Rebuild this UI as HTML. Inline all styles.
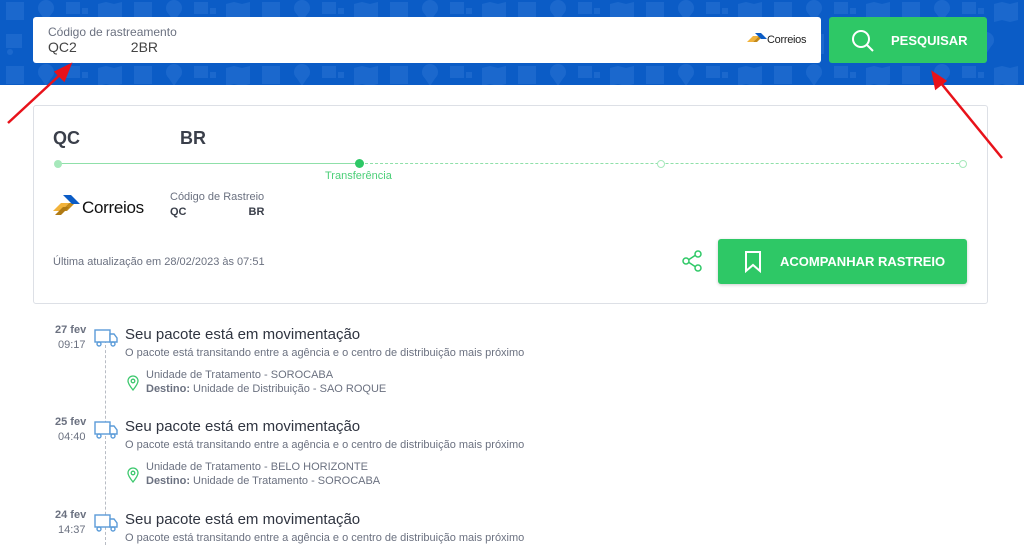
<!DOCTYPE html>
<html><head><meta charset="utf-8"><style>
*{margin:0;padding:0;box-sizing:border-box}
body{width:1024px;height:545px;overflow:hidden;background:#fff;font-family:"Liberation Sans",sans-serif;color:#3a3f4a;position:relative}
.hdr{position:absolute;left:0;top:0;width:1024px;height:85px;background:#0b5cc6;overflow:hidden}
.inp{position:absolute;left:33px;top:17px;width:788px;height:46px;background:#fff;border-radius:3px}
.btn{position:absolute;background:#2ec866;border-radius:3px;color:#fff;font-weight:bold;font-size:13px}
.card{position:absolute;left:33px;top:105px;width:955px;height:199px;border:1px solid #dde0e6;border-radius:3px}
.ab{position:absolute;white-space:nowrap}
.g{color:#6b7180}
</style></head><body>
<div class="hdr">
<svg width="1024" height="85" style="position:absolute;left:0;top:0;opacity:0.12">
<defs><pattern id="p" width="128" height="64" patternUnits="userSpaceOnUse" x="-2" y="-2">
<rect x="8" y="4" width="18" height="18" fill="#8fc0ff"/>
<circle cx="48" cy="10" r="8" fill="#8fc0ff"/><path d="M40 12 L48 24 L56 12z" fill="#8fc0ff"/>
<rect x="68" y="4" width="14" height="12" fill="#8fc0ff"/><rect x="84" y="10" width="6" height="6" fill="#8fc0ff"/>
<path d="M100 6 L108 4 L116 6 L124 4 V22 L116 24 L108 22 L100 24z" fill="#8fc0ff"/>
<rect x="8" y="36" width="16" height="14" fill="#8fc0ff"/><circle cx="12" cy="54" r="3" fill="#8fc0ff"/>
<rect x="40" y="36" width="18" height="20" fill="#8fc0ff"/>
<circle cx="92" cy="42" r="8" fill="#8fc0ff"/><path d="M84 44 L92 56 L100 44z" fill="#8fc0ff"/>
</pattern></defs><rect width="1024" height="85" fill="url(#p)"/></svg>
</div>
<div class="inp">
<div class="ab g" style="left:15px;top:8px;font-size:12px">Código de rastreamento</div>
<div class="ab" style="left:15px;top:22px;font-size:14px;color:#444">QC2<span style="margin-left:54px">2BR</span></div>
<svg class="ab" style="left:714px;top:16px" width="20" height="14"><path d="M0 9 L6 3 L12 3 L6 9z" fill="#f2b33b"/><path d="M6 9 L12 3 L16 3 L10 9z" fill="#c48a1b"/><path d="M8 0 L14 0 L20 6 L14 6z" fill="#0b5cc6"/></svg>
<div class="ab" style="left:734px;top:17px;font-size:11px;color:#222;letter-spacing:-0.3px">Correios</div>
</div>
<div class="btn" style="left:829px;top:17px;width:158px;height:46px">
<svg class="ab" style="left:22px;top:12px" width="24" height="24" fill="none" stroke="#fff" stroke-width="2"><circle cx="10" cy="10" r="8"/><path d="M16 16 L22 22"/></svg>
<div class="ab" style="left:62px;top:16px">PESQUISAR</div></div>

<div class="card">
<div class="ab" style="left:19px;top:22px;font-size:18px;font-weight:bold;color:#3a3f4a">QC<span style="margin-left:100px">BR</span></div>
<div class="ab" style="left:24px;top:57px;width:302px;height:1px;background:#8fe0a9"></div>
<div class="ab" style="left:326px;top:57px;width:604px;border-top:1px dashed #8fe0a9"></div>
<div class="ab" style="left:20px;top:54px;width:8px;height:8px;border-radius:50%;background:#a6e8bb"></div>
<div class="ab" style="left:321px;top:53px;width:9px;height:9px;border-radius:50%;background:#2ec866"></div>
<div class="ab" style="left:623px;top:54px;width:8px;height:8px;border-radius:50%;border:1px solid #a6e8bb;background:#fff"></div>
<div class="ab" style="left:925px;top:54px;width:8px;height:8px;border-radius:50%;border:1px solid #a6e8bb;background:#fff"></div>
<div class="ab" style="left:291px;top:64px;font-size:11px;color:#4ccf78">Transferência</div>
<svg class="ab" style="left:19px;top:89px" width="28" height="22"><path d="M0 16 L8 8 L16 8 L8 16z" fill="#f2b33b"/><path d="M8 16 L16 8 L22 8 L14 16z" fill="#c48a1b"/><path d="M10 0 L18 0 L27 9 L19 9z" fill="#0b5cc6"/><path d="M2 20 L10 12 L16 12 L8 20z" fill="#b07a14"/></svg>
<div class="ab" style="left:48px;top:92px;font-size:17px;color:#111;letter-spacing:-0.3px">Correios</div>
<div class="ab g" style="left:136px;top:85px;font-size:11px">Código de Rastreio</div>
<div class="ab" style="left:136px;top:100px;font-size:11px;font-weight:bold">QC<span style="margin-left:62px">BR</span></div>
<div class="ab g" style="left:19px;top:150px;font-size:11px">Última atualização em 28/02/2023 às 07:51</div>
<svg class="ab" style="left:648px;top:144px" width="22" height="22" fill="none" stroke="#2ec866" stroke-width="1.5"><circle cx="16" cy="4" r="3"/><circle cx="4" cy="11" r="3"/><circle cx="16" cy="18" r="3"/><path d="M7 9.5 L13 5.5 M7 12.5 L13 16.5"/></svg>
</div>
<div class="btn" style="left:718px;top:239px;width:249px;height:45px;box-shadow:0 1px 3px rgba(0,0,0,.2)">
<svg class="ab" style="left:27px;top:12px" width="16" height="22" fill="none" stroke="#fff" stroke-width="2"><path d="M1 1 H15 V20 L8 14 L1 20z"/></svg>
<div class="ab" style="left:62px;top:15px">ACOMPANHAR RASTREIO</div></div>

<div class="ab" style="left:105px;top:340px;height:205px;border-left:1px dashed #b8bcc4"></div>
<svg width="0" height="0" style="position:absolute"><defs><g id="tr" fill="#fff" stroke="#5b9bd8" stroke-width="1.4"><rect x="1" y="2" width="15" height="12"/><path d="M16 6 H20 L23 10 V14 H16z"/><circle cx="5" cy="16" r="2"/><circle cx="19" cy="16" r="2"/></g>
<g id="pin" fill="none" stroke="#3cc86d" stroke-width="1.3"><path d="M6 15 C2 10 1 8 1 6 A5 5 0 0 1 11 6 C11 8 10 10 6 15z"/><circle cx="6" cy="6" r="1.8"/></g></defs></svg>

<div class="ab" style="left:0;top:323px;width:1024px">
<div class="ab g" style="left:55px;top:1px;font-size:11px;font-weight:bold">27 fev</div>
<div class="ab g" style="left:58px;top:16px;font-size:11px">09:17</div>
<svg class="ab" style="left:94px;top:5px" width="25" height="20"><use href="#tr"/></svg>
<div class="ab" style="left:125px;top:3px;font-size:15px;color:#2f3440">Seu pacote está em movimentação</div>
<div class="ab g" style="left:125px;top:24px;font-size:11px">O pacote está transitando entre a agência e o centro de distribuição mais próximo</div>
<svg class="ab" style="left:127px;top:52px" width="12" height="16"><use href="#pin"/></svg>
<div class="ab g" style="left:146px;top:46px;font-size:11px">Unidade de Tratamento - SOROCABA</div>
<div class="ab g" style="left:146px;top:60px;font-size:11px"><b>Destino:</b> Unidade de Distribuição - SAO ROQUE</div>
</div>
<div class="ab" style="left:0;top:415px;width:1024px">
<div class="ab g" style="left:55px;top:1px;font-size:11px;font-weight:bold">25 fev</div>
<div class="ab g" style="left:58px;top:16px;font-size:11px">04:40</div>
<svg class="ab" style="left:94px;top:5px" width="25" height="20"><use href="#tr"/></svg>
<div class="ab" style="left:125px;top:3px;font-size:15px;color:#2f3440">Seu pacote está em movimentação</div>
<div class="ab g" style="left:125px;top:24px;font-size:11px">O pacote está transitando entre a agência e o centro de distribuição mais próximo</div>
<svg class="ab" style="left:127px;top:52px" width="12" height="16"><use href="#pin"/></svg>
<div class="ab g" style="left:146px;top:46px;font-size:11px">Unidade de Tratamento - BELO HORIZONTE</div>
<div class="ab g" style="left:146px;top:60px;font-size:11px"><b>Destino:</b> Unidade de Tratamento - SOROCABA</div>
</div>
<div class="ab" style="left:0;top:508px;width:1024px">
<div class="ab g" style="left:55px;top:1px;font-size:11px;font-weight:bold">24 fev</div>
<div class="ab g" style="left:58px;top:16px;font-size:11px">14:37</div>
<svg class="ab" style="left:94px;top:5px" width="25" height="20"><use href="#tr"/></svg>
<div class="ab" style="left:125px;top:3px;font-size:15px;color:#2f3440">Seu pacote está em movimentação</div>
<div class="ab g" style="left:125px;top:24px;font-size:11px">O pacote está transitando entre a agência e o centro de distribuição mais próximo</div>
</div>

<svg class="ab" style="left:0;top:0" width="1024" height="545"><g stroke="#e8121a" stroke-width="2.5" fill="#e8121a">
<path d="M8 123 L62 73" fill="none"/><path d="M70 65 L56 72 L64 80z"/>
<path d="M1002 158 L940 82" fill="none"/><path d="M933 73 L936 88 L945 81z"/></g></svg>
</body></html>
